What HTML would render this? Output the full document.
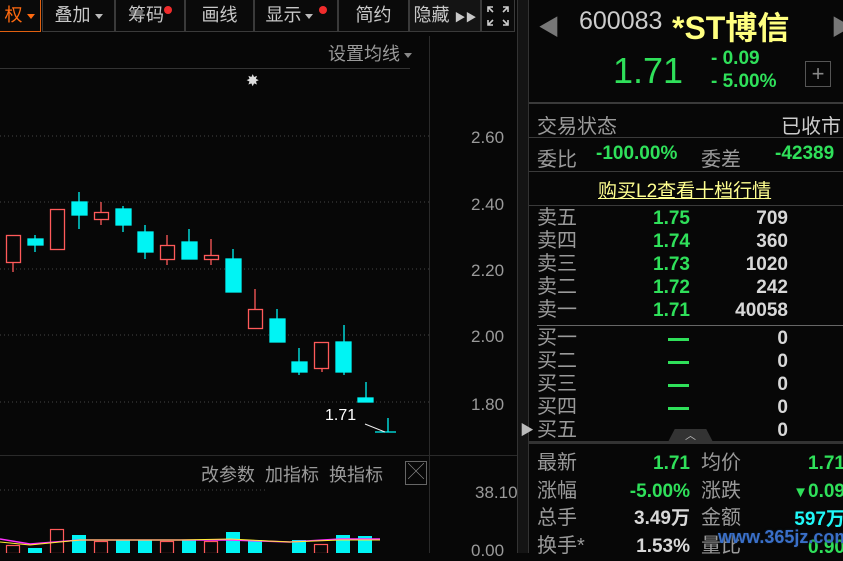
<!DOCTYPE html>
<html><head><meta charset="utf-8"><style>
*{margin:0;padding:0;box-sizing:border-box}
body{width:843px;height:553px;background:#070707;overflow:hidden;position:relative;font-family:"Liberation Sans","Noto Sans CJK SC",sans-serif;color:#b8b8b8}
.a{position:absolute;white-space:nowrap}
.tb{position:absolute;top:0;height:32px;border:1px solid #3a3a3a;border-top:none;color:#c8c8c8;font-size:18px;line-height:31px;text-align:center;background:#0a0a0a}
.dot{display:inline-block;width:8px;height:8px;border-radius:50%;background:#f02c2c;vertical-align:top;margin-top:6px}
.tri{display:inline-block;width:0;height:0;border-left:4px solid transparent;border-right:4px solid transparent;border-top:5px solid #bbb;vertical-align:middle;margin-left:4px}
.g{color:#2fe05a;font-weight:bold}
.w{color:#d8d8d8;font-weight:bold}
.lab{color:#9a9a9a;font-size:20px}
.hl{position:absolute;left:529px;width:314px;height:2px;background:#3a3a3a}
.dash{position:absolute;height:3px;width:21px;background:#2fe05a;left:668px}
</style></head><body>
<div class="tb" style="left:-2px;width:43px;border-color:#e06010;color:#ff6a10">权<span class="tri" style="border-top-color:#ff6a10"></span></div>
<div class="tb" style="left:42px;width:73px">叠加<span class="tri"></span></div>
<div class="tb" style="left:115px;width:70px">筹码<span class="dot"></span></div>
<div class="tb" style="left:185px;width:69px">画线</div>
<div class="tb" style="left:254px;width:84px">显示<span class="tri"></span> <span class="dot"></span></div>
<div class="tb" style="left:338px;width:71px">简约</div>
<div class="tb" style="left:409px;width:72px;background:#141414">隐藏 <span style="font-size:11px">▶▶</span></div>
<div class="tb" style="left:481px;width:34px">
<svg width="24" height="22" viewBox="0 0 24 22" style="margin-top:5px" fill="none" stroke="#ccc" stroke-width="1.6"><path d="M2 7V2h5M2 2l5 5M22 7V2h-5M22 2l-5 5M2 15v5h5M2 20l5-5M22 15v5h-5M22 20l-5-5"/></svg></div>
<div class="a" style="left:328px;top:40px;font-size:18px;color:#9a9a9a">设置均线<span class="tri" style="border-top-color:#888"></span></div>
<div class="a" style="left:0;top:68px;width:410px;height:1px;background:#333"></div>
<div class="a" style="left:246px;top:71px;color:#ddd;font-size:16px">✸</div>
<div class="a" style="left:429px;top:36px;width:1px;height:517px;background:#2a2a2a"></div>
<div class="a" style="left:0;top:455px;width:518px;height:1px;background:#2a2a2a"></div>
<svg class="a" style="left:0;top:0" width="518" height="553">
<g stroke="#444" stroke-dasharray="1 3" stroke-width="1">
<line x1="0" y1="136" x2="429" y2="136"/><line x1="0" y1="202" x2="429" y2="202"/><line x1="0" y1="269" x2="429" y2="269"/><line x1="0" y1="335" x2="429" y2="335"/><line x1="0" y1="402" x2="429" y2="402"/><line x1="0" y1="490" x2="268" y2="490"/></g>
<g stroke="#ff5a5a" fill="none" stroke-width="1.3">
<path d="M13 263v9"/><rect x="6.5" y="235.5" width="14" height="27"/>
<rect x="50.5" y="209.5" width="14" height="40"/>
<path d="M101 202v10M101 220v5"/><rect x="94.5" y="212.5" width="14" height="7"/>
<path d="M167 235v10M167 259v6"/><rect x="160.5" y="245.5" width="14" height="14"/>
<path d="M211 239v16M211 259v6"/><rect x="204.5" y="255.5" width="14" height="4"/>
<path d="M255 289v20"/><rect x="248.5" y="309.5" width="14" height="19"/>
<path d="M322 369v3"/><rect x="314.5" y="342.5" width="14" height="26"/>
</g>
<g fill="#00f4f4" stroke="#00f4f4" stroke-width="1.3">
<path d="M35 235v17"/><rect x="28" y="239" width="15" height="6"/>
<path d="M79 192v37"/><rect x="72" y="202" width="15" height="13"/>
<path d="M123 206v26"/><rect x="116" y="209" width="15" height="16"/>
<path d="M145 225v34"/><rect x="138" y="232" width="15" height="20"/>
<path d="M189 229v13"/><rect x="182" y="242" width="15" height="17"/>
<path d="M233 249v10"/><rect x="226" y="259" width="15" height="33"/>
<path d="M277 309v10"/><rect x="270" y="319" width="15" height="23"/>
<path d="M299 348v27"/><rect x="292" y="362" width="15" height="10"/>
<path d="M344 325v50"/><rect x="336" y="342" width="15" height="30"/>
<path d="M366 382v16"/><rect x="358" y="398" width="15" height="4"/>
<path d="M388 418v14M375 432h21"/>
</g>
<path d="M365 424l20 8" stroke="#eee" stroke-width="1" fill="none"/>
<g fill="#00f4f4"><rect x="28" y="548" width="14" height="5"/><rect x="72" y="535" width="14" height="18"/><rect x="116" y="540" width="14" height="13"/><rect x="138" y="540" width="14" height="13"/><rect x="182" y="540" width="14" height="13"/><rect x="226" y="532" width="14" height="21"/><rect x="248" y="540" width="14" height="13"/><rect x="292" y="540" width="14" height="13"/><rect x="336" y="535" width="14" height="18"/><rect x="358" y="536" width="14" height="17"/></g>
<g fill="none" stroke="#ff5a5a" stroke-width="1.2"><rect x="6.5" y="545.5" width="13" height="8"/><rect x="50.5" y="529.5" width="13" height="24"/><rect x="94.5" y="541.5" width="13" height="12"/><rect x="160.5" y="541.5" width="13" height="12"/><rect x="204.5" y="541.5" width="13" height="12"/><rect x="314.5" y="544.5" width="13" height="9"/></g>
<path d="M0 539l30 5 50-4 100 0 50 0 60 2 50-3 40 0" stroke="#ff30ff" stroke-width="1.5" fill="none"/>
<path d="M0 542l30 3 50-5 100 0 50-1 60 3 50-2 40 0" stroke="#ffee30" stroke-width="1" fill="none"/>
</svg>
<div class="a" style="left:325px;top:407px;color:#fff;font-size:16px">1.71</div>
<div class="a" style="left:471px;top:128px;font-size:17px;color:#9a9a9a">2.60</div>
<div class="a" style="left:471px;top:195px;font-size:17px;color:#9a9a9a">2.40</div>
<div class="a" style="left:471px;top:261px;font-size:17px;color:#9a9a9a">2.20</div>
<div class="a" style="left:471px;top:327px;font-size:17px;color:#9a9a9a">2.00</div>
<div class="a" style="left:471px;top:395px;font-size:17px;color:#9a9a9a">1.80</div>
<div class="a" style="left:475px;top:483px;font-size:17px;color:#9a9a9a">38.10</div>
<div class="a" style="left:471px;top:541px;font-size:17px;color:#9a9a9a">0.00</div>
<div class="a" style="left:201px;top:461px;font-size:18px;color:#9a9a9a">改参数&nbsp;&nbsp;加指标&nbsp;&nbsp;换指标</div>
<div class="a" style="left:405px;top:461px;width:22px;height:24px;border:1px solid #666;color:#888;font-size:16px;text-align:center;line-height:22px">╳</div>
<div class="a" style="left:517px;top:0;width:12px;height:553px;background:#141414;border-left:1px solid #333;border-right:1px solid #333"></div>
<div class="a" style="left:520px;top:420px;color:#bbb;font-size:14px">▶</div>
<div class="a" style="left:538px;top:10px;color:#777;font-size:22px">◀</div>
<div class="a" style="left:831px;top:10px;color:#777;font-size:22px">▶</div>
<div class="a" style="left:579px;top:7px;color:#ccc;font-size:25px">600083</div>
<div class="a" style="left:672px;top:3px;color:#ffff80;font-size:32px;font-weight:bold">*ST博信</div>
<div class="a g" style="left:613px;top:50px;font-size:36px;font-weight:normal">1.71</div>
<div class="a g" style="left:711px;top:48px;font-size:19px">- 0.09</div>
<div class="a g" style="left:711px;top:71px;font-size:19px">- 5.00%</div>
<div class="a" style="left:805px;top:61px;width:26px;height:26px;border:1px solid #555;color:#888;font-size:22px;text-align:center;line-height:24px">+</div>
<div class="hl" style="top:102px"></div>
<div class="a lab" style="left:537px;top:110px">交易状态</div>
<div class="a lab" style="left:781px;top:110px;color:#ccc">已收市</div>
<div class="hl" style="top:137px;height:1px"></div>
<div class="a lab" style="left:537px;top:143px">委比</div>
<div class="a g" style="left:596px;top:143px;font-size:19px">-100.00%</div>
<div class="a lab" style="left:701px;top:143px">委差</div>
<div class="a g" style="left:775px;top:143px;font-size:19px">-42389</div>
<div class="hl" style="top:171px;height:1px"></div>
<div class="a" style="left:598px;top:176px;color:#ffff90;font-size:19px;text-decoration:underline">购买L2查看十档行情</div>
<div class="hl" style="top:205px;height:1px"></div>
<div class="a lab" style="left:537px;top:207px;line-height:23px">卖五<br>卖四<br>卖三<br>卖二<br>卖一</div>
<div class="a g" style="left:600px;top:207px;width:90px;text-align:right;line-height:23px;font-size:19px">1.75<br>1.74<br>1.73<br>1.72<br>1.71</div>
<div class="a w" style="left:700px;top:207px;width:88px;text-align:right;line-height:23px;font-size:19px">709<br>360<br>1020<br>242<br>40058</div>
<div class="hl" style="top:325px;left:537px;width:306px;height:1px;background:#666"></div>
<div class="a lab" style="left:537px;top:327px;line-height:23px">买一<br>买二<br>买三<br>买四<br>买五</div>
<div class="dash" style="top:338px"></div><div class="dash" style="top:361px"></div><div class="dash" style="top:384px"></div><div class="dash" style="top:407px"></div>
<div class="a w" style="left:700px;top:327px;width:88px;text-align:right;line-height:23px;font-size:19px">0<br>0<br>0<br>0<br>0</div>
<div class="a" style="left:668px;top:429px;width:45px;height:13px;background:#333;clip-path:polygon(15% 0,85% 0,100% 100%,0 100%);color:#bbb;font-size:11px;text-align:center;line-height:14px">︿</div>
<div class="hl" style="top:441px;height:3px;background:#333"></div>
<div class="a lab" style="left:537px;top:450px;line-height:27.5px">最新<br>涨幅<br>总手<br>换手*</div>
<div class="a" style="left:600px;top:450px;width:90px;text-align:right;line-height:27.5px;font-size:19px;font-weight:bold"><span class="g">1.71</span><br><span class="g">-5.00%</span><br><span class="w">3.49万</span><br><span class="w">1.53%</span></div>
<div class="a lab" style="left:701px;top:450px;line-height:27.5px">均价<br>涨跌<br>金额<br>量比</div>
<div class="a" style="left:745px;top:450px;width:100px;text-align:right;line-height:27.5px;font-size:19px;font-weight:bold"><span class="g">1.71</span><br><span class="g"><span style="font-size:15px">▼</span>0.09</span><br><span style="color:#20f8f8">597万</span><br><span class="g">0.90</span></div>
<div class="a" style="left:718px;top:527px;color:#3a6fc8;font-size:18px;font-weight:bold;text-shadow:0 0 2px #123">www.365jz.com</div>
</body></html>
